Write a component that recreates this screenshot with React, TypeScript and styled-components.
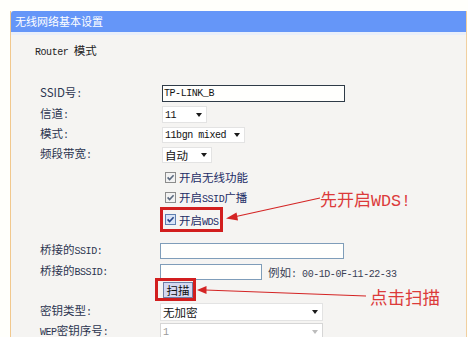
import React from "react";
import styled, { createGlobalStyle } from "styled-components";

const Global = createGlobalStyle`
  html, body { margin: 0; padding: 0; background: #fffffb; }
  body {
    font-family: "Noto Sans CJK SC", "Liberation Sans", sans-serif;
    font-size: 11.5px;
    color: #2c3550;
  }
`;

const Stage = styled.div`
  position: relative;
  width: 468px;
  height: 337px;
  overflow: hidden;
  box-sizing: border-box;
  padding: 11px 0 0 10px;
`;

const Panel = styled.section`
  width: 457px;
  height: 340px;
  box-sizing: border-box;
  border-left: 1px solid #f1c88e;
  border-right: 1px solid #f1cf9f;
  background: #f5f4f2;
`;

const Header = styled.div`
  height: 21px;
  line-height: 21px;
  background: #6596f8;
  color: #fff;
  font-size: 11px;
  padding-left: 4px;
  border-top-left-radius: 3px;
  border-bottom: 3px solid #e9effb;
`;

const Body = styled.div`
  padding: 5px 0 0 24px;
`;

const ModeTitle = styled.div`
  height: 20px;
  line-height: 20px;
  color: #222;
`;

const Form = styled.div`
  display: flex;
  flex-direction: column;
  margin-top: 22px;
`;

const Row = styled.div<{ $gap?: number }>`
  display: grid;
  grid-template-columns: 125px 1fr;
  height: 20px;
  align-items: center;
  margin-top: ${(p) => p.$gap ?? 0}px;
`;

const Label = styled.div`
  padding-left: 5px;
  white-space: nowrap;
  line-height: 20px;
`;

const Cell = styled.div`
  display: flex;
  align-items: center;
  height: 100%;
  gap: 6px;
`;

const Lat = styled.span<{ $size?: number; $track?: number }>`
  font-family: "Liberation Mono", "Courier New", monospace;
  font-size: ${(p) => p.$size ?? 10}px;
  letter-spacing: ${(p) => p.$track ?? -0.45}px;
`;

const Input = styled.div<{ $w: number; $h: number; $dark?: boolean; $off?: number }>`
  box-sizing: border-box;
  width: ${(p) => p.$w}px;
  height: ${(p) => p.$h}px;
  margin-left: ${(p) => p.$off ?? 0}px;
  border: 1px solid ${(p) => (p.$dark ? "#2f3b48" : "#7f9db9")};
  background: #fffffd;
  display: flex;
  align-items: center;
  padding-left: 1px;
  color: #111;
`;

const SelectBox = styled.div<{ $w: number; $h: number; $off?: number; $disabled?: boolean }>`
  box-sizing: border-box;
  width: ${(p) => p.$w}px;
  height: ${(p) => p.$h}px;
  margin-left: ${(p) => p.$off ?? 0}px;
  display: flex;
  align-items: center;
  justify-content: space-between;
  padding: 0 4px 0 2px;
  line-height: 14px;
  background: #fff;
  border: 1px solid ${(p) => (p.$disabled ? "#d6d6d6" : "#e3e3e3")};
  color: ${(p) => (p.$disabled ? "#9a9a9a" : "#111")};
  white-space: nowrap;
`;

const Caret = styled.span<{ $disabled?: boolean }>`
  width: 0;
  height: 0;
  border-left: 3.5px solid transparent;
  border-right: 3.5px solid transparent;
  border-top: 4px solid ${(p) => (p.$disabled ? "#bcbcbc" : "#1a1a1a")};
`;

const Check = styled.label<{ $indent?: number }>`
  display: inline-flex;
  align-items: center;
  gap: 3px;
  height: 19px;
  margin-left: ${(p) => p.$indent ?? 0}px;
  color: #1d2d66;
  white-space: nowrap;
`;

const RedFrame = styled.div<{ $pad: string; $shift: number; $top: number }>`
  display: inline-flex;
  align-items: flex-start;
  align-self: flex-start;
  border: 3px solid #d21e1e;
  padding: ${(p) => p.$pad};
  margin-left: ${(p) => p.$shift}px;
  margin-top: ${(p) => p.$top}px;
`;

const ScanButton = styled.button`
  box-sizing: border-box;
  width: 30px;
  height: 16px;
  padding: 0;
  border: 1px solid #6d7fa6;
  background: #d5d9f1;
  font-family: "Noto Sans CJK SC", sans-serif;
  font-size: 11.5px;
  line-height: 13px;
  color: #111;
`;

const Hint = styled.span`
  color: #3a3f55;
  white-space: nowrap;
`;

const Overlay = styled.svg`
  position: absolute;
  left: 0;
  top: 0;
  width: 468px;
  height: 337px;
  pointer-events: none;
`;

const Note = styled.div<{ $x: number; $y: number; $size: number }>`
  position: absolute;
  left: ${(p) => p.$x}px;
  top: ${(p) => p.$y}px;
  font-size: ${(p) => p.$size}px;
  line-height: 1;
  color: #dc3a3a;
  white-space: nowrap;
`;

const Box = ({ focus }: { focus?: boolean }) => (
  <svg width="11" height="11" viewBox="0 0 11 11">
    <rect x="0.5" y="0.5" width="10" height="10" fill={focus ? "#d9e4f6" : "#f2f2f2"} stroke={focus ? "#5f7fb0" : "#8c8c8c"} />
    <path d="M2.6 5.4 L4.6 7.6 L8.6 3.2" fill="none" stroke={focus ? "#27478a" : "#5b6a80"} strokeWidth="1.6" />
  </svg>
);

const Select = ({ w, h, off, disabled, children }: { w: number; h: number; off?: number; disabled?: boolean; children: React.ReactNode }) => (
  <SelectBox $w={w} $h={h} $off={off} $disabled={disabled}>
    <span>{children}</span>
    <Caret $disabled={disabled} />
  </SelectBox>
);

export default function App() {
  return (
    <>
      <Global />
      <Stage>
        <Panel>
          <Header>无线网络基本设置</Header>
          <Body>
            <ModeTitle>
              <Lat>Router </Lat>模式
            </ModeTitle>
            <Form>
              <Row>
                <Label>SSID号<Lat>:</Lat></Label>
                <Cell>
                  <Input $w={183} $h={17} $dark $off={2}>
                    <Lat>TP-LINK_B</Lat>
                  </Input>
                </Cell>
              </Row>
              <Row $gap={1}>
                <Label>信道<Lat>:</Lat></Label>
                <Cell>
                  <Select w={45} h={17} off={2}><Lat>11</Lat></Select>
                </Cell>
              </Row>
              <Row>
                <Label>模式<Lat>:</Lat></Label>
                <Cell>
                  <Select w={83} h={16} off={2}><Lat>11bgn mixed</Lat></Select>
                </Cell>
              </Row>
              <Row>
                <Label>频段带宽<Lat>:</Lat></Label>
                <Cell>
                  <Select w={50} h={16} off={2}>自动</Select>
                </Cell>
              </Row>
              <Row $gap={4}>
                <Label />
                <Cell>
                  <Check $indent={5}><Box /><span>开启无线功能</span></Check>
                </Cell>
              </Row>
              <Row>
                <Label />
                <Cell>
                  <Check $indent={5}><Box /><span>开启<Lat>SSID</Lat>广播</span></Check>
                </Cell>
              </Row>
              <Row>
                <Label />
                <Cell>
                  <RedFrame $pad="0 1px 0 2px" $shift={0} $top={0}>
                    <Check><Box focus /><span>开启<Lat>WDS</Lat></span></Check>
                  </RedFrame>
                </Cell>
              </Row>
              <Row $gap={12}>
                <Label>桥接的<Lat>SSID:</Lat></Label>
                <Cell>
                  <Input $w={184} $h={16} />
                </Cell>
              </Row>
              <Row $gap={1}>
                <Label>桥接的<Lat>BSSID:</Lat></Label>
                <Cell>
                  <Input $w={102} $h={16} />
                  <Hint>例如<Lat>: 00-1D-0F-11-22-33</Lat></Hint>
                </Cell>
              </Row>
              <Row>
                <Label />
                <Cell>
                  <RedFrame $pad="1px 0 0 5px" $shift={-5} $top={-2}>
                    <ScanButton type="button">扫描</ScanButton>
                  </RedFrame>
                </Cell>
              </Row>
              <Row>
                <Label>密钥类型<Lat>:</Lat></Label>
                <Cell>
                  <Select w={163} h={18}>无加密</Select>
                </Cell>
              </Row>
              <Row>
                <Label><Lat>WEP</Lat>密钥序号<Lat>:</Lat></Label>
                <Cell>
                  <Select w={163} h={18} disabled><Lat>1</Lat></Select>
                </Cell>
              </Row>
            </Form>
          </Body>
        </Panel>

        <Overlay viewBox="0 0 468 337">
          <line x1="236" y1="216.5" x2="320" y2="198" stroke="#d42424" strokeWidth="1.2" />
          <polygon points="226,218.5 236.5,212.5 238,220.5" fill="#d42424" />
          <line x1="205" y1="290" x2="366" y2="296" stroke="#d42424" strokeWidth="1.2" />
          <polygon points="197,290 206.5,286 206.5,294" fill="#d42424" />
        </Overlay>
        <Note $x={320} $y={190} $size={17}>
          先开启<Lat $size={16.7} $track={0}>WDS!</Lat>
        </Note>
        <Note $x={370} $y={288} $size={17.5}>点击扫描</Note>
      </Stage>
    </>
  );
}
